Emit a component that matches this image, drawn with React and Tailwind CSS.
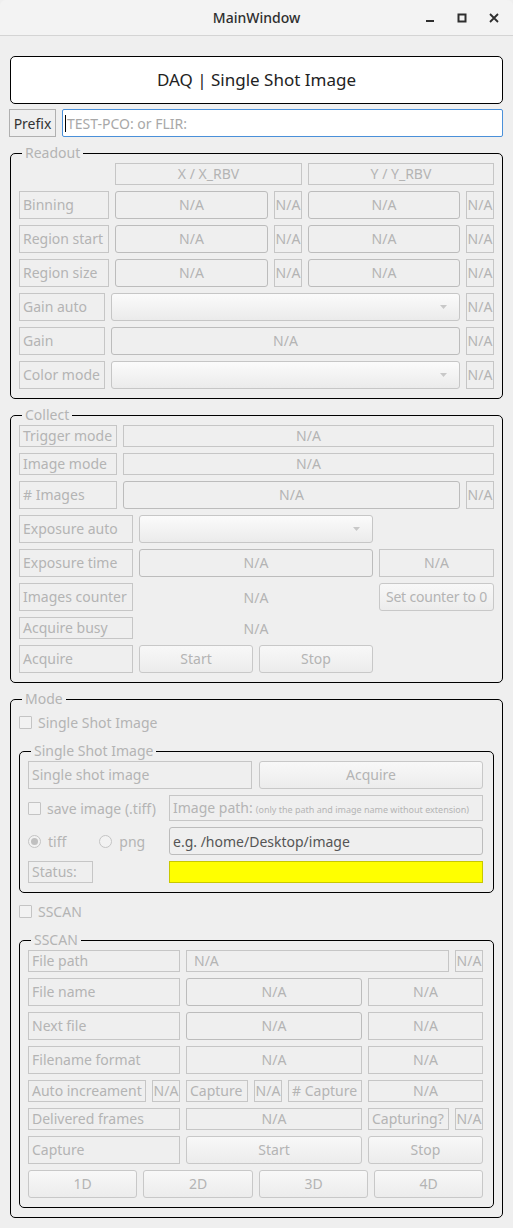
import React from "react";

const font = { fontFamily: "'Noto Sans', 'DejaVu Sans', sans-serif" };

function Lbl({ className = "", center, dark, children }) {
  return (
    <div
      className={`${className} shrink-0 border border-[#c6c6c6] flex items-center whitespace-nowrap overflow-hidden text-[14px] leading-none ${
        center ? "justify-center" : "pl-[3px]"
      } ${dark ? "text-[#333]" : "text-[#b4b4b4]"}`}
    >
      {children}
    </div>
  );
}

function NA({ className = "h-[28px]" }) {
  return (
    <div
      className={`${className} w-[28px] shrink-0 border border-[#c6c6c6] flex items-center justify-center overflow-hidden text-[14px] leading-none text-[#b4b4b4]`}
    >
      N/A
    </div>
  );
}

function Field({ className = "", children = "N/A" }) {
  return (
    <div
      className={`${className} shrink-0 h-[28px] rounded-[3px] border border-[#bcbcbc] bg-[#efefef] flex items-center justify-center text-[14px] leading-none text-[#b4b4b4]`}
    >
      {children}
    </div>
  );
}

function Combo({ className = "" }) {
  return (
    <div
      className={`${className} shrink-0 h-[28px] rounded-[3px] border border-[#c6c6c6] bg-gradient-to-b from-[#fbfbfb] to-[#ebebeb] flex items-center justify-end pr-[12px]`}
    >
      <svg width="7" height="4" viewBox="0 0 7 4">
        <path d="M0 0 L7 0 L3.5 4 Z" fill="#c8c8c8" />
      </svg>
    </div>
  );
}

function Btn({ className = "", children }) {
  return (
    <div
      className={`${className} shrink-0 h-[28px] rounded-[3px] border border-[#c8c8c8] bg-gradient-to-b from-[#f8f8f8] to-[#ececec] flex items-center justify-center whitespace-nowrap text-[14px] leading-none text-[#b4b4b4]`}
    >
      {children}
    </div>
  );
}

function Check({ children }) {
  return (
    <div className="flex items-center gap-[6px] text-[14px] text-[#b4b4b4] whitespace-nowrap">
      <div className="w-[13px] h-[13px] border border-[#c4c4c4] bg-[#f2f2f2] rounded-[1px]" />
      {children}
    </div>
  );
}

function Radio({ checked, children }) {
  return (
    <div className="flex items-center gap-[7px] text-[14px] text-[#b4b4b4] whitespace-nowrap">
      <div className="w-[13px] h-[13px] rounded-full border border-[#c4c4c4] bg-[#f2f2f2] flex items-center justify-center">
        {checked && <div className="w-[7px] h-[7px] rounded-full bg-[#c0c0c0]" />}
      </div>
      {children}
    </div>
  );
}

function Group({ title, className = "", children }) {
  return (
    <fieldset className={`${className} border border-black rounded-[5px] px-[8px] pb-[9px] min-w-0`}>
      <legend className="ml-[3px] px-[3px] text-[14px] leading-[20px] text-[#b4b4b4]">{title}</legend>
      <div className="flex flex-col gap-[6px]">{children}</div>
    </fieldset>
  );
}

function TitleBar() {
  return (
    <div className="h-[36px] bg-[#f3f3f3] border-b border-[#d4d4d4] relative flex items-center justify-center rounded-t-[6px]">
      <span className="text-[14px] font-medium text-[#2e2e2e]">MainWindow</span>
      <div className="absolute right-[14px] top-0 h-full flex items-center gap-[22px]">
        <svg width="10" height="10" viewBox="0 0 10 10">
          <rect x="1" y="7" width="8" height="2" fill="#2e2e2e" />
        </svg>
        <svg width="10" height="10" viewBox="0 0 10 10">
          <rect x="1.5" y="1.5" width="7" height="7" fill="none" stroke="#2e2e2e" strokeWidth="2" />
        </svg>
        <svg width="10" height="10" viewBox="0 0 10 10">
          <path d="M1 1 L9 9 M9 1 L1 9" stroke="#2e2e2e" strokeWidth="1.8" />
        </svg>
      </div>
    </div>
  );
}

export default function App() {
  return (
    <div className="w-[513px] h-[1228px] bg-[#efefef] overflow-hidden" style={font}>
      <TitleBar />
      <div className="px-[10px]">
        {/* Header */}
        <div className="mt-[20px] h-[48px] bg-white border border-black rounded-[5px] flex items-center justify-center text-[17px] text-[#222]">
          DAQ | Single Shot Image
        </div>

        {/* Prefix */}
        <div className="mt-[5px] ml-[-1px] flex gap-[6px] h-[28px]">
          <div className="w-[47px] border border-[#b0b0b0] flex items-center justify-center text-[14px] text-[#333]">
            Prefix
          </div>
          <div className="flex-1 bg-white border border-[#4a90d9] rounded-[2px] flex items-center pl-[2px] text-[14px] text-[#a8a8a8]">
            <span className="w-[1px] h-[17px] bg-black mr-px" />
            TEST-PCO: or FLIR:
          </div>
        </div>

        {/* Readout */}
        <Group title="Readout" className="mt-[6px]">
          <div className="flex gap-[6px] h-[22px]">
            <div className="w-[90px] shrink-0" />
            <Lbl center className="w-[187px] h-[22px]">X / X_RBV</Lbl>
            <Lbl center className="w-[186px] h-[22px]">Y / Y_RBV</Lbl>
          </div>
          {["Binning", "Region start", "Region size"].map((t) => (
            <div key={t} className="flex gap-[6px]">
              <Lbl className="w-[90px] h-[28px]">{t}</Lbl>
              <Field className="w-[153px]" />
              <NA />
              <Field className="w-[152px]" />
              <NA />
            </div>
          ))}
          <div className="flex gap-[6px]">
            <Lbl className="w-[86px] h-[28px]">Gain auto</Lbl>
            <Combo className="w-[349px]" />
            <NA />
          </div>
          <div className="flex gap-[6px]">
            <Lbl className="w-[86px] h-[28px]">Gain</Lbl>
            <Field className="w-[349px]" />
            <NA />
          </div>
          <div className="flex gap-[6px]">
            <Lbl className="w-[86px] h-[28px]">Color mode</Lbl>
            <Combo className="w-[349px]" />
            <NA />
          </div>
        </Group>

        {/* Collect */}
        <Group title="Collect" className="mt-[6px]">
          <div className="flex gap-[6px]">
            <Lbl className="w-[98px] h-[22px]">Trigger mode</Lbl>
            <Lbl center className="w-[371px] h-[22px]">N/A</Lbl>
          </div>
          <div className="flex gap-[6px]">
            <Lbl className="w-[98px] h-[22px]">Image mode</Lbl>
            <Lbl center className="w-[371px] h-[22px]">N/A</Lbl>
          </div>
          <div className="flex gap-[6px]">
            <Lbl className="w-[98px] h-[28px]"># Images</Lbl>
            <Field className="w-[337px]" />
            <NA />
          </div>
          <div className="flex gap-[6px]">
            <Lbl className="w-[114px] h-[28px]">Exposure auto</Lbl>
            <Combo className="w-[234px]" />
          </div>
          <div className="flex gap-[6px]">
            <Lbl className="w-[114px] h-[28px]">Exposure time</Lbl>
            <Field className="w-[234px]" />
            <Lbl center className="w-[115px] h-[28px]">N/A</Lbl>
          </div>
          <div className="flex gap-[6px]">
            <Lbl className="w-[114px] h-[28px]">Images counter</Lbl>
            <div className="w-[234px] shrink-0 flex items-center justify-center text-[14px] text-[#b4b4b4]">N/A</div>
            <Btn className="w-[115px] tracking-[-0.2px]">Set counter to 0</Btn>
          </div>
          <div className="flex gap-[6px]">
            <Lbl className="w-[114px] h-[22px]">Acquire busy</Lbl>
            <div className="w-[234px] shrink-0 flex items-center justify-center text-[14px] text-[#b4b4b4]">N/A</div>
          </div>
          <div className="flex gap-[6px]">
            <Lbl className="w-[114px] h-[28px]">Acquire</Lbl>
            <Btn className="w-[114px]">Start</Btn>
            <Btn className="w-[114px]">Stop</Btn>
          </div>
        </Group>

        {/* Mode */}
        <fieldset className="mt-[6px] border border-black rounded-[5px] px-[8px] pb-[9px] min-w-0">
          <legend className="ml-[3px] px-[3px] text-[14px] leading-[20px] text-[#b4b4b4]">Mode</legend>
          <div className="h-[26px] flex items-center">
            <Check>Single Shot Image</Check>
          </div>

          <Group title="Single Shot Image" className="mt-[6px]">
            <div className="flex gap-[7px]">
              <Lbl className="w-[224px] h-[28px]">Single shot image</Lbl>
              <Btn className="w-[224px]">Acquire</Btn>
            </div>
            <div className="flex items-center">
              <div className="w-[141px] shrink-0">
                <Check>save image (.tiff)</Check>
              </div>
              <Lbl className="w-[314px] h-[26px]">
                Image path: <span className="text-[9px] ml-[3px] mt-[3px]">(only the path and image name without extension)</span>
              </Lbl>
            </div>
            <div className="flex items-center">
              <div className="w-[141px] shrink-0 flex gap-[33px]">
                <Radio checked>tiff</Radio>
                <Radio>png</Radio>
              </div>
              <div className="w-[314px] h-[28px] rounded-[3px] border border-[#bcbcbc] flex items-center pl-[3px] text-[14px] text-[#555]">
                e.g. /home/Desktop/image
              </div>
            </div>
            <div className="flex items-center">
              <div className="w-[141px] shrink-0">
                <Lbl className="w-[65px] h-[22px]">Status:</Lbl>
              </div>
              <div className="w-[314px] h-[22px] bg-[#ffff00] border border-[#c8c800]" />
            </div>
          </Group>

          <div className="mt-[6px] h-[25px] flex items-center">
            <Check>SSCAN</Check>
          </div>

          <Group title="SSCAN" className="mt-[6px]">
            <div className="flex gap-[6px]">
              <Lbl className="w-[152px] h-[22px]">File path</Lbl>
              <Lbl className="w-[263px] h-[22px]">
                <span className="ml-[4px]">N/A</span>
              </Lbl>
              <NA className="h-[22px]" />
            </div>
            <div className="flex gap-[6px]">
              <Lbl className="w-[152px] h-[28px]">File name</Lbl>
              <Field className="w-[176px]" />
              <Lbl center className="w-[115px] h-[28px]">N/A</Lbl>
            </div>
            <div className="flex gap-[6px]">
              <Lbl className="w-[152px] h-[28px]">Next file</Lbl>
              <Field className="w-[176px]" />
              <Lbl center className="w-[115px] h-[28px]">N/A</Lbl>
            </div>
            <div className="flex gap-[6px]">
              <Lbl className="w-[152px] h-[28px]">Filename format</Lbl>
              <Lbl center className="w-[176px] h-[28px]">N/A</Lbl>
              <Lbl center className="w-[115px] h-[28px]">N/A</Lbl>
            </div>
            <div className="flex gap-[6px]">
              <Lbl className="w-[118px] h-[22px]">Auto increament</Lbl>
              <NA className="h-[22px]" />
              <Lbl className="w-[62px] h-[22px]">Capture</Lbl>
              <NA className="h-[22px]" />
              <Lbl className="w-[74px] h-[22px]"># Capture</Lbl>
              <Lbl center className="w-[115px] h-[22px]">N/A</Lbl>
            </div>
            <div className="flex gap-[6px]">
              <Lbl className="w-[152px] h-[22px]">Delivered frames</Lbl>
              <Lbl center className="w-[176px] h-[22px]">N/A</Lbl>
              <Lbl className="w-[81px] h-[22px]">Capturing?</Lbl>
              <NA className="h-[22px]" />
            </div>
            <div className="flex gap-[6px]">
              <Lbl className="w-[152px] h-[28px]">Capture</Lbl>
              <Btn className="w-[176px]">Start</Btn>
              <Btn className="w-[115px]">Stop</Btn>
            </div>
            <div className="flex gap-[6px]">
              <Btn className="w-[109px]">1D</Btn>
              <Btn className="w-[110px]">2D</Btn>
              <Btn className="w-[109px]">3D</Btn>
              <Btn className="w-[109px]">4D</Btn>
            </div>
          </Group>
        </fieldset>
      </div>
    </div>
  );
}
